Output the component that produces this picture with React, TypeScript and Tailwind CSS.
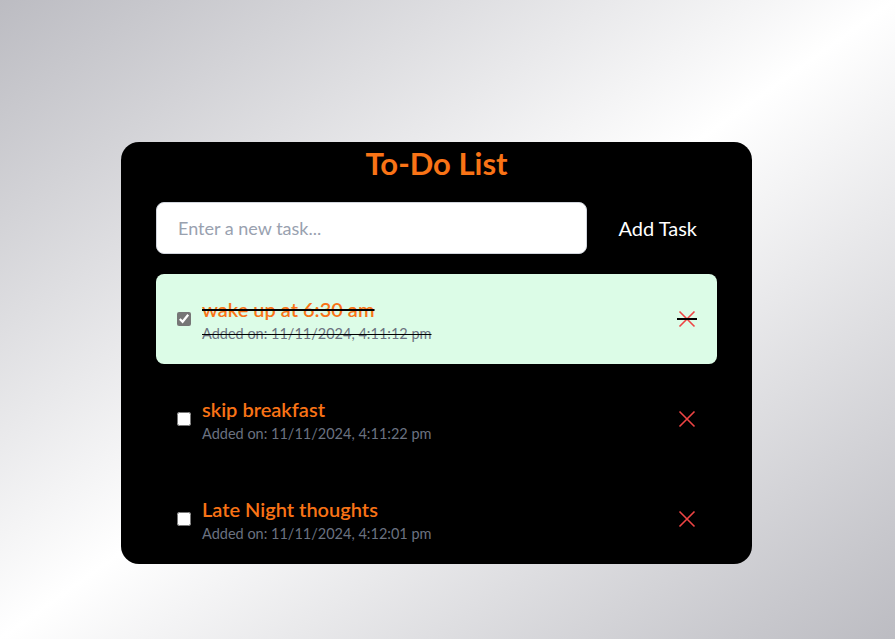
import { useState } from "react";

type Task = { id: number; text: string; added: string; done: boolean };

const initialTasks: Task[] = [
  { id: 1, text: "wake up at 6:30 am", added: "11/11/2024, 4:11:12 pm", done: true },
  { id: 2, text: "skip breakfast", added: "11/11/2024, 4:11:22 pm", done: false },
  { id: 3, text: "Late Night thoughts", added: "11/11/2024, 4:12:01 pm", done: false },
];

function CloseIcon() {
  return (
    <svg width="18" height="18" viewBox="0 0 18 18" fill="none" stroke="#ef4444" strokeWidth="1.6">
      <path d="M1.5 1.5 L16.5 16.5 M16.5 1.5 L1.5 16.5" />
    </svg>
  );
}

function TaskItem({ task, onToggle, onDelete }: { task: Task; onToggle: () => void; onDelete: () => void }) {
  return (
    <li
      className={
        task.done
          ? "flex items-center h-[90px] pl-[21px] pr-[20px] rounded-lg bg-[#dcfce7] line-through decoration-black"
          : "flex items-center h-[90px] pl-[21px] pr-[20px] rounded-lg"
      }
    >
      <input
        type="checkbox"
        checked={task.done}
        onChange={onToggle}
        className="w-[14px] h-[14px] mr-[11px] accent-[#767676]"
      />
      <div className="flex flex-col flex-1 pt-[3px]">
        <span className="text-[20px] leading-[24px] font-semibold text-[#f97316]">{task.text}</span>
        <span className="text-[14.5px] leading-[20px] mt-[3px] text-[#6b7280]">Added on: {task.added}</span>
      </div>
      <button onClick={onDelete} className="relative flex items-center justify-center w-[20px] h-[20px]">
        <CloseIcon />
        {task.done && <span className="absolute left-0 right-0 top-[9px] h-[2px] bg-black" />}
      </button>
    </li>
  );
}

export default function App() {
  const [tasks, setTasks] = useState<Task[]>(initialTasks);
  const [draft, setDraft] = useState("");

  const addTask = () => {
    if (!draft.trim()) return;
    setTasks([...tasks, { id: Date.now(), text: draft.trim(), added: new Date().toLocaleString(), done: false }]);
    setDraft("");
  };

  return (
    <div className="min-h-[639px] w-full bg-linear-to-br from-[#bcbcc2] via-white to-[#bcbcc2] pt-[142px] pl-[121px] font-['Lato',sans-serif]">
      <div className="w-[631px] h-[422px] overflow-hidden bg-black rounded-[18px] px-[35px] pt-[3px]">
        <h1 className="text-center text-[31px] leading-[36px] font-bold text-[#f97316]">To-Do List</h1>
        <div className="flex items-center mt-[21px]">
          <input
            value={draft}
            onChange={(e) => setDraft(e.target.value)}
            placeholder="Enter a new task..."
            className="w-[431px] h-[52px] rounded-lg bg-white border border-gray-300 px-[21px] text-[18px] text-gray-800 placeholder:text-gray-400 outline-none"
          />
          <button onClick={addTask} className="ml-auto mr-[20px] text-white text-[20px]">
            Add Task
          </button>
        </div>
        <ul className="flex flex-col gap-[10px] mt-[20px]">
          {tasks.map((t) => (
            <TaskItem
              key={t.id}
              task={t}
              onToggle={() => setTasks(tasks.map((x) => (x.id === t.id ? { ...x, done: !x.done } : x)))}
              onDelete={() => setTasks(tasks.filter((x) => x.id !== t.id))}
            />
          ))}
        </ul>
      </div>
    </div>
  );
}
